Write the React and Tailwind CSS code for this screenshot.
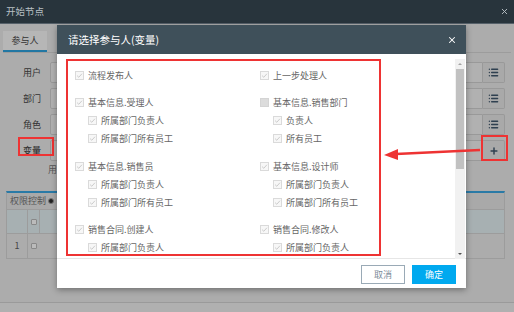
import React from 'react';
import { X, List, Plus } from 'lucide-react';

const GROUPS_LEFT = [
    { title: '流程发布人', items: [] },
    { title: '基本信息.受理人', items: ['所属部门负责人', '所属部门所有员工'] },
    { title: '基本信息.销售员', items: ['所属部门负责人', '所属部门所有员工'] },
    { title: '销售合同.创建人', items: ['所属部门负责人'] },
];

const GROUPS_RIGHT = [
    { title: '上一步处理人', items: [] },
    { title: '基本信息.销售部门', items: ['负责人', '所有员工'], empty: true },
    { title: '基本信息.设计师', items: ['所属部门负责人', '所属部门所有员工'] },
    { title: '销售合同.修改人', items: ['所属部门负责人'] },
];

/* ── tiny disabled checkbox ── */
const Check = ({ empty }) => (
    <span className={`w-[9px] h-[9px] shrink-0 border flex items-center justify-center
        ${empty ? 'bg-[#dcdcdc] border-[#d4d4d4]' : 'bg-[#f7f7f7] border-[#dadada]'}`}>
        {!empty && (
            <svg viewBox="0 0 10 10" className="w-[7px] h-[7px]">
                <path d="M1.5 5.2 L4 7.5 L8.5 2.5" fill="none" stroke="#c4c4c4" strokeWidth="1.2" />
            </svg>
        )}
    </span>
);

const Row = ({ label, empty, sub }) => (
    <div className={`h-[18px] flex items-center gap-[4px] ${sub ? 'pl-[13px]' : ''}`}>
        <Check empty={empty} />
        <span className="text-[9px] text-[#666] leading-none">{label}</span>
    </div>
);

const Column = ({ groups }) => (
    <div className="flex flex-col gap-[9.5px]">
        {groups.map((g) => (
            <div key={g.title}>
                <Row label={g.title} empty={g.empty} />
                {g.items.map((it) => <Row key={it} label={it} sub />)}
            </div>
        ))}
    </div>
);

const FormRow = ({ label, plus, mark }) => (
    <div className="flex items-center h-[21px]">
        <span className={`w-[47px] text-[9px] text-[#333] leading-none pl-[20px] ${mark ? 'font-medium' : ''}`}>{label}</span>
        <div className="flex-1 h-full border border-[#999] bg-[#b1b1b1] rounded-l-[2px]" />
        <div className="w-[22px] h-full border border-l-0 border-[#999] bg-[#a9a9a9] flex items-center justify-center rounded-r-[2px]">
            {plus ? <Plus className="w-[10px] h-[10px] text-[#2f4050]" strokeWidth={3.5} /> : <List className="w-[11px] h-[11px] text-[#2f4050]" strokeWidth={3} />}
        </div>
    </div>
);

export default function App() {
    return (
        <div className="w-[514px] h-[312px] relative overflow-hidden bg-[#acacac]" style={{ fontFamily: '"Noto Sans CJK SC", "Noto Sans", sans-serif' }}>
            {/* ── top bar ── */}
            <div className="h-[24px] bg-[#28343c] flex items-center justify-between pl-[6px] pr-[5px] border-b border-[#56616a]">
                <span className="text-[9.5px] text-[#b9c0c5]">开始节点</span>
                <X className="w-[9px] h-[9px] text-[#b9c0c5]" strokeWidth={2.5} />
            </div>

            {/* ── page behind ── */}
            <div className="px-[3px] pt-[7px]">
                <div className="border-b border-[#9c9c9c] flex">
                    <div className="w-[44px] h-[21px] bg-[#b6b6b6] border-b-2 border-[#2277a3] flex items-center justify-center text-[9px] text-[#333]">参与人</div>
                </div>

                <div className="pr-[6px] pt-[9px] flex flex-col gap-[5px]">
                    <FormRow label="用户" />
                    <FormRow label="部门" />
                    <FormRow label="角色" />
                    <FormRow label="变量" plus mark />
                </div>
                <div className="pl-[45px] pt-[1px] text-[9px] text-[#555] leading-[16px]">用</div>

                <div className="mt-[13px] ml-[3px] mr-[6px] border-t-2 border-[#2a7aa6] border-x border-b border-x-[#9c9c9c] border-b-[#9c9c9c]">
                    <div className="h-[17px] flex items-center gap-[2px] pl-[3px] border-b border-[#9c9c9c] bg-[#a9a9a9]">
                        <span className="text-[9px] text-[#555]">权限控制</span>
                        <span className="w-[6px] h-[6px] rounded-full bg-[#222] border border-[#777]" />
                    </div>
                    <div className="h-[24px] flex border-b border-[#9c9c9c] bg-[#a7b0b2]">
                        <div className="w-[21px] border-r border-[#9c9c9c]" />
                        <div className="w-[12px] border-r border-[#9c9c9c] flex items-center justify-center">
                            <span className="w-[6px] h-[6px] border border-[#888] bg-[#bbb] rounded-[1px]" />
                        </div>
                    </div>
                    <div className="h-[24px] flex">
                        <div className="w-[21px] border-r border-[#9c9c9c] flex items-center justify-center text-[9px] text-[#444]">1</div>
                        <div className="w-[12px] flex items-center justify-center">
                            <span className="w-[6px] h-[6px] border border-[#888] bg-[#bbb] rounded-[1px]" />
                        </div>
                    </div>
                </div>
            </div>
            <div className="absolute left-0 right-0 top-[302px] border-t border-[#9a9a9a] h-[10px] bg-[#b0b0b0]" />

            {/* ── annotation: red boxes ── */}
            <div className="absolute left-[18px] top-[137px] w-[36px] h-[19px] border-2 border-[#ee3333]" />
            <div className="absolute left-[481px] top-[135px] w-[27px] h-[26px] border-2 border-[#ee3333]" />

            {/* ── modal ── */}
            <div className="absolute left-[57px] top-[25px] w-[409px] h-[263px] bg-white shadow-[0_2px_6px_rgba(0,0,0,0.35)] flex flex-col">
                <div className="h-[29px] bg-[#3f505a] flex items-center justify-between pl-[11px] pr-[9px]">
                    <span className="text-[10.5px] text-white">请选择参与人(变量)</span>
                    <X className="w-[10px] h-[10px] text-white" strokeWidth={2.5} />
                </div>
                <div className="h-[205px] flex pt-[5px] pl-[9px] pr-[1px] border-b border-[#e6e6e6]">
                    <div className="w-[315px] h-[197px] border-2 border-[#ee3333] overflow-hidden pl-[7px] pt-[5px] grid grid-cols-[185px_1fr]">
                        <Column groups={GROUPS_LEFT} />
                        <Column groups={GROUPS_RIGHT} />
                    </div>
                    <div className="flex-1" />
                    <div className="w-[10px] h-[200px] bg-[#f1f1f1] flex flex-col items-center">
                        <svg viewBox="0 0 10 10" className="w-[10px] h-[10px]"><path d="M3 6 L5 4 L7 6 Z" fill="#a3a3a3" /></svg>
                        <div className="w-[8px] h-[100px] bg-[#c1c1c1]" />
                        <div className="flex-1" />
                        <svg viewBox="0 0 10 10" className="w-[10px] h-[10px]"><path d="M3 4 L5 6 L7 4 Z" fill="#505050" /></svg>
                    </div>
                </div>
                <div className="flex justify-end gap-[7px] pt-[6px] pr-[10px]">
                    <button className="w-[44px] h-[19px] border border-[#9aaab6] text-[9px] text-[#7c8c99] bg-white">取消</button>
                    <button className="w-[44px] h-[19px] bg-[#00a9ef] text-[9px] text-white">确定</button>
                </div>
            </div>

            {/* ── red arrow ── */}
            <svg className="absolute left-[380px] top-[145px] w-[102px] h-[16px]" viewBox="0 0 102 16">
                <path d="M100 5 L16 9" stroke="#ee3333" strokeWidth="2.5" fill="none" />
                <path d="M4 10 L18 4 L18 15 Z" fill="#ee3333" />
            </svg>
        </div>
    );
}
